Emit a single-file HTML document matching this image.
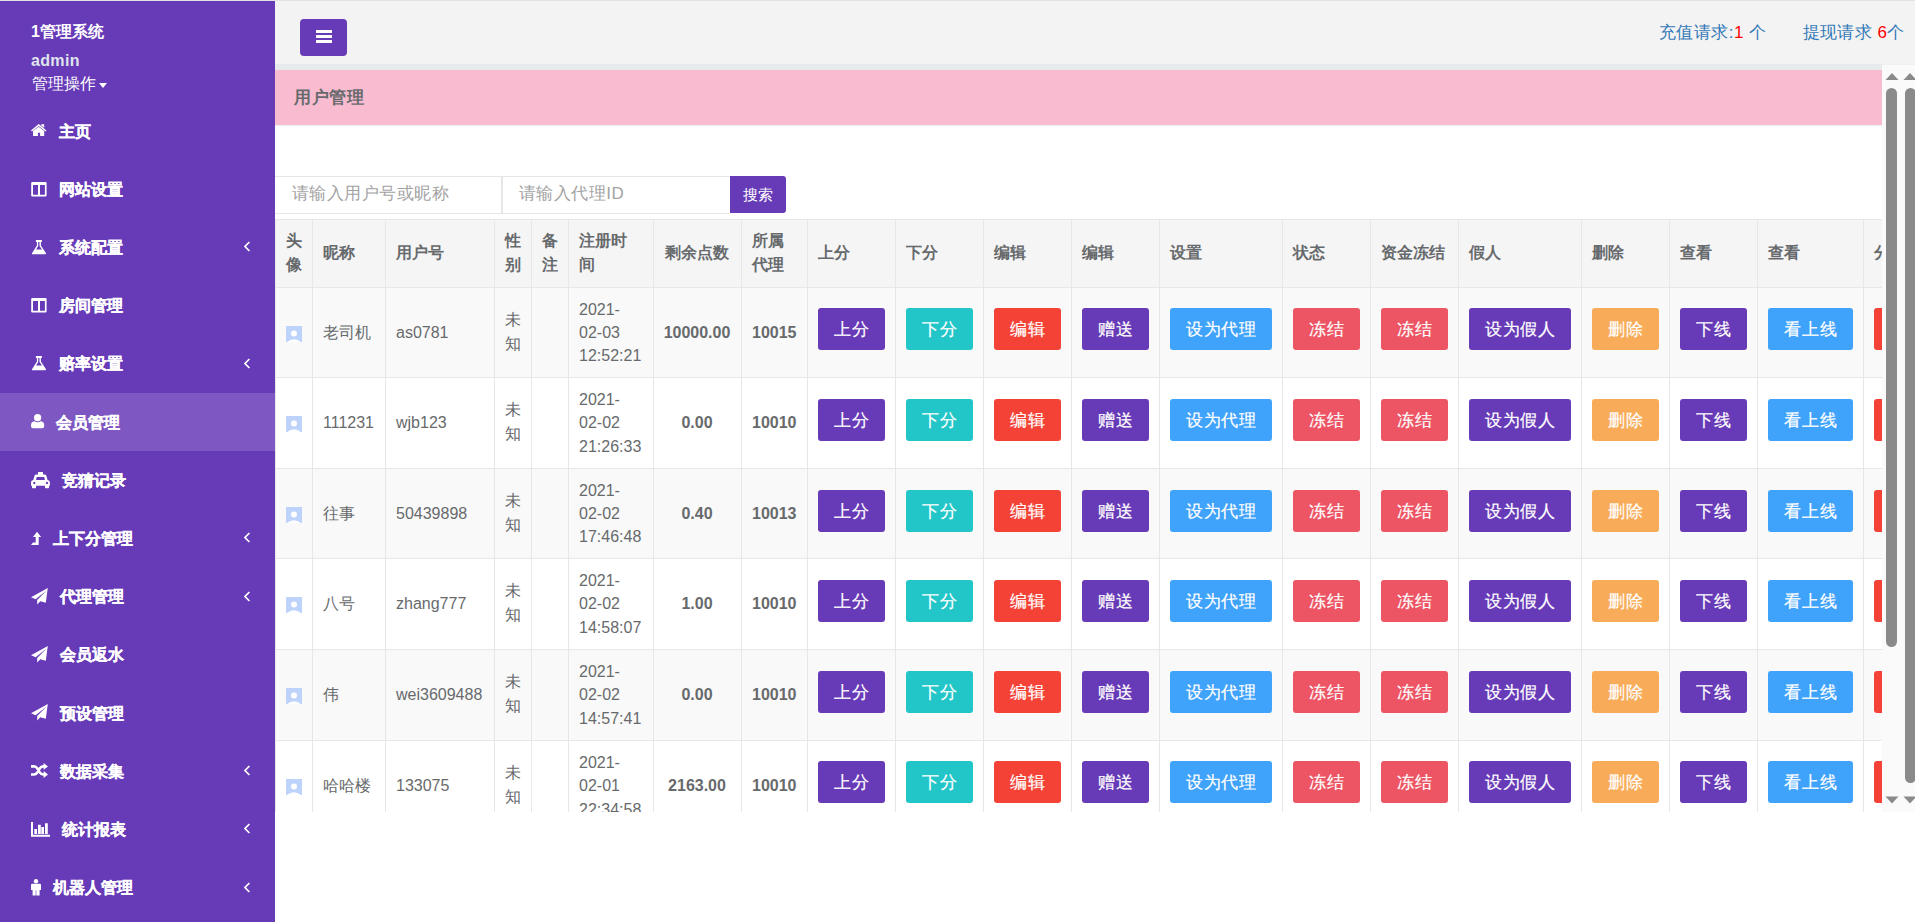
<!DOCTYPE html><html><head><meta charset="utf-8"><title>用户管理</title><style>

*{box-sizing:border-box;margin:0;padding:0}
html,body{width:1915px;height:922px;overflow:hidden;background:#fff;font-family:"Liberation Sans",sans-serif;color:#676a6c}
.a{position:absolute}
.sb{left:0;top:1px;width:275px;height:921px;background:#673ab7;z-index:5}
.nav{position:absolute;left:0;width:275px;height:58.2px;color:#fff;font-weight:bold;font-size:16px;-webkit-text-stroke:0.25px #fff}
.nav.act{background:#7e57c2}
.nav .t{position:absolute;top:0.5px;line-height:58.2px;white-space:nowrap}
.nav svg{position:absolute}
.nav .ar{position:absolute;left:244px;top:23px}
.hd{left:0;top:1px;width:1915px;height:63px;background:#f3f3f4}
.topline{left:0;top:0;width:1915px;height:1px;background:#e2e2e2}
.frame{left:0;top:0;width:1882px;height:812px;overflow:hidden}
.vl{position:absolute;width:1px;background:#e7e7e7}
.hl{position:absolute;height:1px;background:#e7e7e7}
.th{position:absolute;font-weight:bold;font-size:16px;line-height:23.4px;color:#676a6c;white-space:nowrap}
.td{position:absolute;font-size:16px;line-height:23.2px;color:#676a6c;white-space:nowrap}
.b{font-weight:bold}
.btn{position:absolute;height:42px;border-radius:3px;color:#fff;font-size:17px;letter-spacing:0.6px;padding-left:0.6px;line-height:43px;text-align:center;white-space:nowrap;-webkit-text-stroke:0.2px #fff}
.pur{background:#673ab7}.teal{background:#23c6c8}.red{background:#f44336}.blue{background:#3fa2fb}.pink{background:#ed5565}.org{background:#f8ac59}
.ph{position:absolute;font-size:17px;letter-spacing:0.45px;color:#a3a3a3;white-space:nowrap;line-height:24px}

</style></head><body>
<div class="a topline"></div>
<div class="a hd"></div>
<div class="a" style="left:300px;top:19px;width:47px;height:37px;background:#673ab7;border-radius:4px"></div>
<div class="a" style="left:316px;top:30px;width:16px;height:3px;background:#fff"></div>
<div class="a" style="left:316px;top:35px;width:16px;height:3px;background:#fff"></div>
<div class="a" style="left:316px;top:40px;width:16px;height:3px;background:#fff"></div>
<div class="a" style="left:1659px;top:20.5px;font-size:17px;letter-spacing:0.45px;line-height:24px;color:#337ab7;white-space:nowrap">充值请求:<span style="color:#f00">1</span> 个</div>
<div class="a" style="left:1802.5px;top:20.5px;font-size:17px;letter-spacing:0.45px;line-height:24px;color:#337ab7;white-space:nowrap">提现请求 <span style="color:#f00">6</span>个</div>
<div class="a frame">
<div class="a" style="left:275px;top:64px;width:1607px;height:6px;background:#e7eaec"></div>
<div class="a" style="left:275px;top:70px;width:1607px;height:55px;background:#f8bbd0"></div>
<div class="a" style="left:275px;top:125px;width:1607px;height:1px;background:#eceff1"></div>
<div class="a" style="left:294px;top:86px;font-size:17px;letter-spacing:0.6px;line-height:24px;font-weight:bold;color:#676a6c">用户管理</div>
<div class="a" style="left:275px;top:176px;width:227px;height:38px;border:1px solid #e5e6e7;border-left:none"></div>
<div class="a" style="left:502px;top:176px;width:228px;height:38px;border:1px solid #e5e6e7;border-right:none"></div>
<div class="ph" style="left:292px;top:182px">请输入用户号或昵称</div>
<div class="ph" style="left:519px;top:182px">请输入代理ID</div>
<div class="a" style="left:730px;top:176px;width:56px;height:37px;background:#673ab7;border-radius:0 3px 3px 0;color:#fff;font-size:15px;line-height:37px;text-align:center">搜索</div>
<div class="a" style="left:275px;top:219px;width:1700px;height:68px;background:#f5f5f6"></div>
<div class="a" style="left:275px;top:287px;width:1700px;height:90px;background:#f9f9f9"></div>
<div class="a" style="left:275px;top:377px;width:1700px;height:91px;background:#fff"></div>
<div class="a" style="left:275px;top:468px;width:1700px;height:90px;background:#f9f9f9"></div>
<div class="a" style="left:275px;top:558px;width:1700px;height:91px;background:#fff"></div>
<div class="a" style="left:275px;top:649px;width:1700px;height:91px;background:#f9f9f9"></div>
<div class="a" style="left:275px;top:740px;width:1700px;height:91px;background:#fff"></div>
<div class="hl" style="left:275px;top:219px;width:1700px"></div>
<div class="hl" style="left:275px;top:287px;width:1700px"></div>
<div class="hl" style="left:275px;top:377px;width:1700px"></div>
<div class="hl" style="left:275px;top:468px;width:1700px"></div>
<div class="hl" style="left:275px;top:558px;width:1700px"></div>
<div class="hl" style="left:275px;top:649px;width:1700px"></div>
<div class="hl" style="left:275px;top:740px;width:1700px"></div>
<div class="hl" style="left:275px;top:831px;width:1700px"></div>
<div class="vl" style="left:275px;top:219px;height:612px"></div>
<div class="vl" style="left:312px;top:219px;height:612px"></div>
<div class="vl" style="left:385px;top:219px;height:612px"></div>
<div class="vl" style="left:494px;top:219px;height:612px"></div>
<div class="vl" style="left:531px;top:219px;height:612px"></div>
<div class="vl" style="left:568px;top:219px;height:612px"></div>
<div class="vl" style="left:653px;top:219px;height:612px"></div>
<div class="vl" style="left:741px;top:219px;height:612px"></div>
<div class="vl" style="left:807px;top:219px;height:612px"></div>
<div class="vl" style="left:895px;top:219px;height:612px"></div>
<div class="vl" style="left:983px;top:219px;height:612px"></div>
<div class="vl" style="left:1071px;top:219px;height:612px"></div>
<div class="vl" style="left:1159px;top:219px;height:612px"></div>
<div class="vl" style="left:1282px;top:219px;height:612px"></div>
<div class="vl" style="left:1370px;top:219px;height:612px"></div>
<div class="vl" style="left:1458px;top:219px;height:612px"></div>
<div class="vl" style="left:1581px;top:219px;height:612px"></div>
<div class="vl" style="left:1669px;top:219px;height:612px"></div>
<div class="vl" style="left:1757px;top:219px;height:612px"></div>
<div class="vl" style="left:1863px;top:219px;height:612px"></div>
<div class="vl" style="left:1970px;top:219px;height:612px"></div>
<div class="th" style="left:286px;top:229.4px">头<br>像</div>
<div class="th" style="left:323px;top:241.10000000000002px">昵称</div>
<div class="th" style="left:396px;top:241.10000000000002px">用户号</div>
<div class="th" style="left:505px;top:229.4px">性<br>别</div>
<div class="th" style="left:542px;top:229.4px">备<br>注</div>
<div class="th" style="left:579px;top:229.4px">注册时<br>间</div>
<div class="th" style="left:653px;width:88px;text-align:center;top:241.10000000000002px">剩余点数</div>
<div class="th" style="left:752px;top:229.4px">所属<br>代理</div>
<div class="th" style="left:818px;top:241.10000000000002px">上分</div>
<div class="th" style="left:906px;top:241.10000000000002px">下分</div>
<div class="th" style="left:994px;top:241.10000000000002px">编辑</div>
<div class="th" style="left:1082px;top:241.10000000000002px">编辑</div>
<div class="th" style="left:1170px;top:241.10000000000002px">设置</div>
<div class="th" style="left:1293px;top:241.10000000000002px">状态</div>
<div class="th" style="left:1381px;top:241.10000000000002px">资金冻结</div>
<div class="th" style="left:1469px;top:241.10000000000002px">假人</div>
<div class="th" style="left:1592px;top:241.10000000000002px">删除</div>
<div class="th" style="left:1680px;top:241.10000000000002px">查看</div>
<div class="th" style="left:1768px;top:241.10000000000002px">查看</div>
<div class="th" style="left:1874px;top:241.10000000000002px">分</div>
<div class="a" style="left:286px;top:325.7px;width:16px;height:16px"><svg width="16" height="16" viewBox="0 0 16 16"><rect width="16" height="16" fill="#bdd3fb"/><circle cx="8" cy="7.6" r="3" fill="#fff"/><path d="M1 16 Q8 10.5 15 16Z" fill="#fff"/></svg></div>
<div class="td" style="left:323px;top:320.9px">老司机</div>
<div class="td" style="left:396px;top:320.9px">as0781</div>
<div class="td" style="left:505px;top:307.8px;line-height:24px">未<br>知</div>
<div class="td" style="left:579px;top:297.7px">2021-<br>02-03<br>12:52:21</div>
<div class="td b" style="left:653px;width:88px;text-align:center;top:320.9px">10000.00</div>
<div class="td b" style="left:752px;top:320.9px">10015</div>
<div class="btn pur" style="left:818px;top:308px;width:67px">上分</div>
<div class="btn teal" style="left:906px;top:308px;width:67px">下分</div>
<div class="btn red" style="left:994px;top:308px;width:67px">编辑</div>
<div class="btn pur" style="left:1082px;top:308px;width:67px">赠送</div>
<div class="btn blue" style="left:1170px;top:308px;width:102px">设为代理</div>
<div class="btn pink" style="left:1293px;top:308px;width:67px">冻结</div>
<div class="btn pink" style="left:1381px;top:308px;width:67px">冻结</div>
<div class="btn pur" style="left:1469px;top:308px;width:102px">设为假人</div>
<div class="btn org" style="left:1592px;top:308px;width:67px">删除</div>
<div class="btn pur" style="left:1680px;top:308px;width:67px">下线</div>
<div class="btn blue" style="left:1768px;top:308px;width:85px">看上线</div>
<div class="btn red" style="left:1874px;top:308px;width:67px"></div>
<div class="a" style="left:286px;top:416.2px;width:16px;height:16px"><svg width="16" height="16" viewBox="0 0 16 16"><rect width="16" height="16" fill="#bdd3fb"/><circle cx="8" cy="7.6" r="3" fill="#fff"/><path d="M1 16 Q8 10.5 15 16Z" fill="#fff"/></svg></div>
<div class="td" style="left:323px;top:411.4px">111231</div>
<div class="td" style="left:396px;top:411.4px">wjb123</div>
<div class="td" style="left:505px;top:398.3px;line-height:24px">未<br>知</div>
<div class="td" style="left:579px;top:388.2px">2021-<br>02-02<br>21:26:33</div>
<div class="td b" style="left:653px;width:88px;text-align:center;top:411.4px">0.00</div>
<div class="td b" style="left:752px;top:411.4px">10010</div>
<div class="btn pur" style="left:818px;top:399px;width:67px">上分</div>
<div class="btn teal" style="left:906px;top:399px;width:67px">下分</div>
<div class="btn red" style="left:994px;top:399px;width:67px">编辑</div>
<div class="btn pur" style="left:1082px;top:399px;width:67px">赠送</div>
<div class="btn blue" style="left:1170px;top:399px;width:102px">设为代理</div>
<div class="btn pink" style="left:1293px;top:399px;width:67px">冻结</div>
<div class="btn pink" style="left:1381px;top:399px;width:67px">冻结</div>
<div class="btn pur" style="left:1469px;top:399px;width:102px">设为假人</div>
<div class="btn org" style="left:1592px;top:399px;width:67px">删除</div>
<div class="btn pur" style="left:1680px;top:399px;width:67px">下线</div>
<div class="btn blue" style="left:1768px;top:399px;width:85px">看上线</div>
<div class="btn red" style="left:1874px;top:399px;width:67px"></div>
<div class="a" style="left:286px;top:506.7px;width:16px;height:16px"><svg width="16" height="16" viewBox="0 0 16 16"><rect width="16" height="16" fill="#bdd3fb"/><circle cx="8" cy="7.6" r="3" fill="#fff"/><path d="M1 16 Q8 10.5 15 16Z" fill="#fff"/></svg></div>
<div class="td" style="left:323px;top:501.9px">往事</div>
<div class="td" style="left:396px;top:501.9px">50439898</div>
<div class="td" style="left:505px;top:488.8px;line-height:24px">未<br>知</div>
<div class="td" style="left:579px;top:478.7px">2021-<br>02-02<br>17:46:48</div>
<div class="td b" style="left:653px;width:88px;text-align:center;top:501.9px">0.40</div>
<div class="td b" style="left:752px;top:501.9px">10013</div>
<div class="btn pur" style="left:818px;top:490px;width:67px">上分</div>
<div class="btn teal" style="left:906px;top:490px;width:67px">下分</div>
<div class="btn red" style="left:994px;top:490px;width:67px">编辑</div>
<div class="btn pur" style="left:1082px;top:490px;width:67px">赠送</div>
<div class="btn blue" style="left:1170px;top:490px;width:102px">设为代理</div>
<div class="btn pink" style="left:1293px;top:490px;width:67px">冻结</div>
<div class="btn pink" style="left:1381px;top:490px;width:67px">冻结</div>
<div class="btn pur" style="left:1469px;top:490px;width:102px">设为假人</div>
<div class="btn org" style="left:1592px;top:490px;width:67px">删除</div>
<div class="btn pur" style="left:1680px;top:490px;width:67px">下线</div>
<div class="btn blue" style="left:1768px;top:490px;width:85px">看上线</div>
<div class="btn red" style="left:1874px;top:490px;width:67px"></div>
<div class="a" style="left:286px;top:597.2px;width:16px;height:16px"><svg width="16" height="16" viewBox="0 0 16 16"><rect width="16" height="16" fill="#bdd3fb"/><circle cx="8" cy="7.6" r="3" fill="#fff"/><path d="M1 16 Q8 10.5 15 16Z" fill="#fff"/></svg></div>
<div class="td" style="left:323px;top:592.4px">八号</div>
<div class="td" style="left:396px;top:592.4px">zhang777</div>
<div class="td" style="left:505px;top:579.3px;line-height:24px">未<br>知</div>
<div class="td" style="left:579px;top:569.2px">2021-<br>02-02<br>14:58:07</div>
<div class="td b" style="left:653px;width:88px;text-align:center;top:592.4px">1.00</div>
<div class="td b" style="left:752px;top:592.4px">10010</div>
<div class="btn pur" style="left:818px;top:580px;width:67px">上分</div>
<div class="btn teal" style="left:906px;top:580px;width:67px">下分</div>
<div class="btn red" style="left:994px;top:580px;width:67px">编辑</div>
<div class="btn pur" style="left:1082px;top:580px;width:67px">赠送</div>
<div class="btn blue" style="left:1170px;top:580px;width:102px">设为代理</div>
<div class="btn pink" style="left:1293px;top:580px;width:67px">冻结</div>
<div class="btn pink" style="left:1381px;top:580px;width:67px">冻结</div>
<div class="btn pur" style="left:1469px;top:580px;width:102px">设为假人</div>
<div class="btn org" style="left:1592px;top:580px;width:67px">删除</div>
<div class="btn pur" style="left:1680px;top:580px;width:67px">下线</div>
<div class="btn blue" style="left:1768px;top:580px;width:85px">看上线</div>
<div class="btn red" style="left:1874px;top:580px;width:67px"></div>
<div class="a" style="left:286px;top:688.2px;width:16px;height:16px"><svg width="16" height="16" viewBox="0 0 16 16"><rect width="16" height="16" fill="#bdd3fb"/><circle cx="8" cy="7.6" r="3" fill="#fff"/><path d="M1 16 Q8 10.5 15 16Z" fill="#fff"/></svg></div>
<div class="td" style="left:323px;top:683.4px">伟</div>
<div class="td" style="left:396px;top:683.4px">wei3609488</div>
<div class="td" style="left:505px;top:670.3px;line-height:24px">未<br>知</div>
<div class="td" style="left:579px;top:660.2px">2021-<br>02-02<br>14:57:41</div>
<div class="td b" style="left:653px;width:88px;text-align:center;top:683.4px">0.00</div>
<div class="td b" style="left:752px;top:683.4px">10010</div>
<div class="btn pur" style="left:818px;top:671px;width:67px">上分</div>
<div class="btn teal" style="left:906px;top:671px;width:67px">下分</div>
<div class="btn red" style="left:994px;top:671px;width:67px">编辑</div>
<div class="btn pur" style="left:1082px;top:671px;width:67px">赠送</div>
<div class="btn blue" style="left:1170px;top:671px;width:102px">设为代理</div>
<div class="btn pink" style="left:1293px;top:671px;width:67px">冻结</div>
<div class="btn pink" style="left:1381px;top:671px;width:67px">冻结</div>
<div class="btn pur" style="left:1469px;top:671px;width:102px">设为假人</div>
<div class="btn org" style="left:1592px;top:671px;width:67px">删除</div>
<div class="btn pur" style="left:1680px;top:671px;width:67px">下线</div>
<div class="btn blue" style="left:1768px;top:671px;width:85px">看上线</div>
<div class="btn red" style="left:1874px;top:671px;width:67px"></div>
<div class="a" style="left:286px;top:779.2px;width:16px;height:16px"><svg width="16" height="16" viewBox="0 0 16 16"><rect width="16" height="16" fill="#bdd3fb"/><circle cx="8" cy="7.6" r="3" fill="#fff"/><path d="M1 16 Q8 10.5 15 16Z" fill="#fff"/></svg></div>
<div class="td" style="left:323px;top:774.4px">哈哈楼</div>
<div class="td" style="left:396px;top:774.4px">133075</div>
<div class="td" style="left:505px;top:761.3px;line-height:24px">未<br>知</div>
<div class="td" style="left:579px;top:751.2px">2021-<br>02-01<br>22:34:58</div>
<div class="td b" style="left:653px;width:88px;text-align:center;top:774.4px">2163.00</div>
<div class="td b" style="left:752px;top:774.4px">10010</div>
<div class="btn pur" style="left:818px;top:761px;width:67px">上分</div>
<div class="btn teal" style="left:906px;top:761px;width:67px">下分</div>
<div class="btn red" style="left:994px;top:761px;width:67px">编辑</div>
<div class="btn pur" style="left:1082px;top:761px;width:67px">赠送</div>
<div class="btn blue" style="left:1170px;top:761px;width:102px">设为代理</div>
<div class="btn pink" style="left:1293px;top:761px;width:67px">冻结</div>
<div class="btn pink" style="left:1381px;top:761px;width:67px">冻结</div>
<div class="btn pur" style="left:1469px;top:761px;width:102px">设为假人</div>
<div class="btn org" style="left:1592px;top:761px;width:67px">删除</div>
<div class="btn pur" style="left:1680px;top:761px;width:67px">下线</div>
<div class="btn blue" style="left:1768px;top:761px;width:85px">看上线</div>
<div class="btn red" style="left:1874px;top:761px;width:67px"></div>
</div>
<div class="a" style="left:1882px;top:64px;width:33px;height:1px;background:#f0f0f1"></div>
<div class="a" style="left:1882px;top:65px;width:33px;height:747px;background:#fafafa"></div>
<svg class="a" style="left:1884.5px;top:72px" width="14" height="9"><path d="M0.5 8 L7 1 L13.5 8Z" fill="#8a8a8a"/></svg>
<svg class="a" style="left:1884.5px;top:796px" width="14" height="9"><path d="M0.5 0.5 L7 7.5 L13.5 0.5Z" fill="#8a8a8a"/></svg>
<svg class="a" style="left:1903px;top:72px" width="14" height="9"><path d="M0.5 8 L7 1 L13.5 8Z" fill="#8a8a8a"/></svg>
<svg class="a" style="left:1903px;top:796px" width="14" height="9"><path d="M0.5 0.5 L7 7.5 L13.5 0.5Z" fill="#8a8a8a"/></svg>
<div class="a" style="left:1886px;top:88px;width:11px;height:559px;background:#8a8a8a;border-radius:5.5px"></div>
<div class="a" style="left:1905px;top:88px;width:11px;height:695px;background:#8a8a8a;border-radius:5.5px"></div>
<div class="a sb">
<div class="a" style="left:31px;top:19px;font-size:16px;font-weight:bold;color:#fff;line-height:24px;white-space:nowrap">1管理系统</div>
<div class="a" style="left:31px;top:48px;font-size:16px;font-weight:bold;color:#dfe4ed;line-height:24px;letter-spacing:0.35px">admin</div>
<div class="a" style="left:32px;top:71px;font-size:16px;color:#fff;line-height:24px;white-space:nowrap">管理操作<span style="display:inline-block;width:0;height:0;border-left:4.5px solid transparent;border-right:4.5px solid transparent;border-top:5px solid #fff;vertical-align:middle;margin-left:3px;position:relative;top:0.5px"></span></div>
<div class="nav" style="top:101.0px">
<svg style="left:31px;top:22.00px" width="16" height="12" viewBox="0 0 16 12"><path d="M7.7 0 L15.5 6.5 L14.5 7.6 L7.7 2 L1 7.6 L0 6.5Z M10.3 0.2 H13.2 V3.8 L10.3 1.5Z M2.1 7 L7.7 2.8 L13.2 7 V11.9 H9.1 V8.7 H6.9 V11.9 H2.1Z" fill="#fff"/></svg>
<span class="t" style="left:59px">主页</span>
</div>
<div class="nav" style="top:159.2px">
<svg style="left:31px;top:21.80px" width="16" height="15" viewBox="0 0 16 15"><path d="M0.2 1 Q0.2 0 1.2 0 H14.6 Q15.6 0 15.6 1 V13.6 Q15.6 14.6 14.6 14.6 H1.2 Q0.2 14.6 0.2 13.6Z M2 3 V12.8 H7 V3Z M9 3 V12.8 H13.9 V3Z" fill="#fff" fill-rule="evenodd"/></svg>
<span class="t" style="left:59px">网站设置</span>
</div>
<div class="nav" style="top:217.4px">
<svg style="left:32px;top:21.60px" width="15" height="15" viewBox="0 0 15 15"><path d="M3.9 0 H9.9 V1.9 H8.9 V5.6 L14 13.2 Q14.3 14.2 13.3 14.2 H0.7 Q-0.3 14.2 0 13.2 L4.9 5.6 V1.9 H3.9Z M6.2 1.9 V5.9 L4.1 9.6 H10 L7.5 5.9 V1.9Z" fill="#fff" fill-rule="evenodd"/></svg>
<span class="t" style="left:59px">系统配置</span>
<svg class="ar" width="7" height="11" viewBox="0 0 7 11"><path d="M5.4 1 L1 5.5 L5.4 10" stroke="#fff" stroke-width="1.7" fill="none"/></svg>
</div>
<div class="nav" style="top:275.6px">
<svg style="left:31px;top:21.60px" width="16" height="15" viewBox="0 0 16 15"><path d="M0.2 1 Q0.2 0 1.2 0 H14.6 Q15.6 0 15.6 1 V13.6 Q15.6 14.6 14.6 14.6 H1.2 Q0.2 14.6 0.2 13.6Z M2 3 V12.8 H7 V3Z M9 3 V12.8 H13.9 V3Z" fill="#fff" fill-rule="evenodd"/></svg>
<span class="t" style="left:59px">房间管理</span>
</div>
<div class="nav" style="top:333.8px">
<svg style="left:32px;top:21.60px" width="15" height="15" viewBox="0 0 15 15"><path d="M3.9 0 H9.9 V1.9 H8.9 V5.6 L14 13.2 Q14.3 14.2 13.3 14.2 H0.7 Q-0.3 14.2 0 13.2 L4.9 5.6 V1.9 H3.9Z M6.2 1.9 V5.9 L4.1 9.6 H10 L7.5 5.9 V1.9Z" fill="#fff" fill-rule="evenodd"/></svg>
<span class="t" style="left:59px">赔率设置</span>
<svg class="ar" width="7" height="11" viewBox="0 0 7 11"><path d="M5.4 1 L1 5.5 L5.4 10" stroke="#fff" stroke-width="1.7" fill="none"/></svg>
</div>
<div class="nav act" style="top:392.0px">
<svg style="left:31px;top:21.00px" width="14" height="15" viewBox="0 0 14 15"><circle cx="6.6" cy="3.7" r="3.6" fill="#fff"/><path d="M0 11.5 Q0 7.6 3.3 7.3 Q6.6 9.2 9.9 7.3 Q13.2 7.6 13.2 11.5 V12.3 Q13.2 14.3 11.2 14.3 H2 Q0 14.3 0 12.3Z" fill="#fff"/></svg>
<span class="t" style="left:56px">会员管理</span>
</div>
<div class="nav" style="top:450.2px">
<svg style="left:31px;top:20.80px" width="19" height="17" viewBox="0 0 19 17"><path d="M7 0 H12 V2.4 H13.6 Q14.9 2.4 15.4 3.8 L16.6 8 Q18.9 8.4 18.9 10.6 V13.8 H18 V15.6 Q18 16.3 17.3 16.3 H14.7 Q14 16.3 14 15.6 V13.8 H5 V15.6 Q5 16.3 4.3 16.3 H1.7 Q1 16.3 1 15.6 V13.8 H0 V10.6 Q0 8.4 2.3 8 L3.5 3.8 Q4 2.4 5.3 2.4 H7Z M5.7 5 L5 7.9 H13.9 L13.3 5Z M3.3 9.8 a1.2 1.2 0 1 0 0.01 0Z M16 9.8 a1.2 1.2 0 1 0 0.01 0Z" fill="#fff" fill-rule="evenodd"/></svg>
<span class="t" style="left:62px">竞猜记录</span>
</div>
<div class="nav" style="top:508.4px">
<svg style="left:31px;top:21.40px" width="11" height="14" viewBox="0 0 11 14"><path d="M6 0.8 L10.1 6 H7.7 V14 H0 L2 11.5 H4.7 V6 H2Z" fill="#fff"/></svg>
<span class="t" style="left:53px">上下分管理</span>
<svg class="ar" width="7" height="11" viewBox="0 0 7 11"><path d="M5.4 1 L1 5.5 L5.4 10" stroke="#fff" stroke-width="1.7" fill="none"/></svg>
</div>
<div class="nav" style="top:566.6px">
<svg style="left:31px;top:20.40px" width="18" height="17" viewBox="0 0 18 17"><path d="M16.8 0 L14.8 14.8 L9.3 13.3 L6.2 16.4 V12 L15.6 2.4 L4.6 11.3 L0 9.2Z" fill="#fff"/></svg>
<span class="t" style="left:59.5px">代理管理</span>
<svg class="ar" width="7" height="11" viewBox="0 0 7 11"><path d="M5.4 1 L1 5.5 L5.4 10" stroke="#fff" stroke-width="1.7" fill="none"/></svg>
</div>
<div class="nav" style="top:624.8px">
<svg style="left:31px;top:20.40px" width="18" height="17" viewBox="0 0 18 17"><path d="M16.8 0 L14.8 14.8 L9.3 13.3 L6.2 16.4 V12 L15.6 2.4 L4.6 11.3 L0 9.2Z" fill="#fff"/></svg>
<span class="t" style="left:59.5px">会员返水</span>
</div>
<div class="nav" style="top:683.0px">
<svg style="left:31px;top:20.40px" width="18" height="17" viewBox="0 0 18 17"><path d="M16.8 0 L14.8 14.8 L9.3 13.3 L6.2 16.4 V12 L15.6 2.4 L4.6 11.3 L0 9.2Z" fill="#fff"/></svg>
<span class="t" style="left:59.5px">预设管理</span>
</div>
<div class="nav" style="top:741.2px">
<svg style="left:31px;top:20.80px" width="18" height="15" viewBox="0 0 18 15"><path d="M0 3.4 H3 Q5 3.4 6.3 5.4 L8.7 9.4 Q10 11.5 12.2 11.5 H13.3 M0 11.5 H3 Q5 11.5 6.3 9.5 L8.7 5.5 Q10 3.4 12.2 3.4 H13.3" stroke="#fff" stroke-width="2.6" fill="none"/><path d="M12.6 0 L17 3.4 L12.6 6.8Z M12.6 8.1 L17 11.5 L12.6 14.9Z" fill="#fff"/></svg>
<span class="t" style="left:59.5px">数据采集</span>
<svg class="ar" width="7" height="11" viewBox="0 0 7 11"><path d="M5.4 1 L1 5.5 L5.4 10" stroke="#fff" stroke-width="1.7" fill="none"/></svg>
</div>
<div class="nav" style="top:799.4px">
<svg style="left:31px;top:21.60px" width="19" height="15" viewBox="0 0 19 15"><path d="M0 0 H2 V12.7 H19 V14.7 H0Z M3.3 7 H6 V12 H3.3Z M7 2.8 H9.8 V12 H7Z M10.3 5.1 H13 V12 H10.3Z M14 1.3 H16.8 V12 H14Z" fill="#fff"/></svg>
<span class="t" style="left:62px">统计报表</span>
<svg class="ar" width="7" height="11" viewBox="0 0 7 11"><path d="M5.4 1 L1 5.5 L5.4 10" stroke="#fff" stroke-width="1.7" fill="none"/></svg>
</div>
<div class="nav" style="top:857.6px">
<svg style="left:31px;top:20.40px" width="11" height="17" viewBox="0 0 11 17"><circle cx="5" cy="2.2" r="2.2" fill="#fff"/><path d="M1.2 4.8 H8.8 Q10 4.8 10 6 V11 H8.6 V16.4 H5.3 V11.5 H4.7 V16.4 H1.6 V11 H0 V6 Q0 4.8 1.2 4.8Z" fill="#fff"/></svg>
<span class="t" style="left:53px">机器人管理</span>
<svg class="ar" width="7" height="11" viewBox="0 0 7 11"><path d="M5.4 1 L1 5.5 L5.4 10" stroke="#fff" stroke-width="1.7" fill="none"/></svg>
</div>
</div>
</body></html>
